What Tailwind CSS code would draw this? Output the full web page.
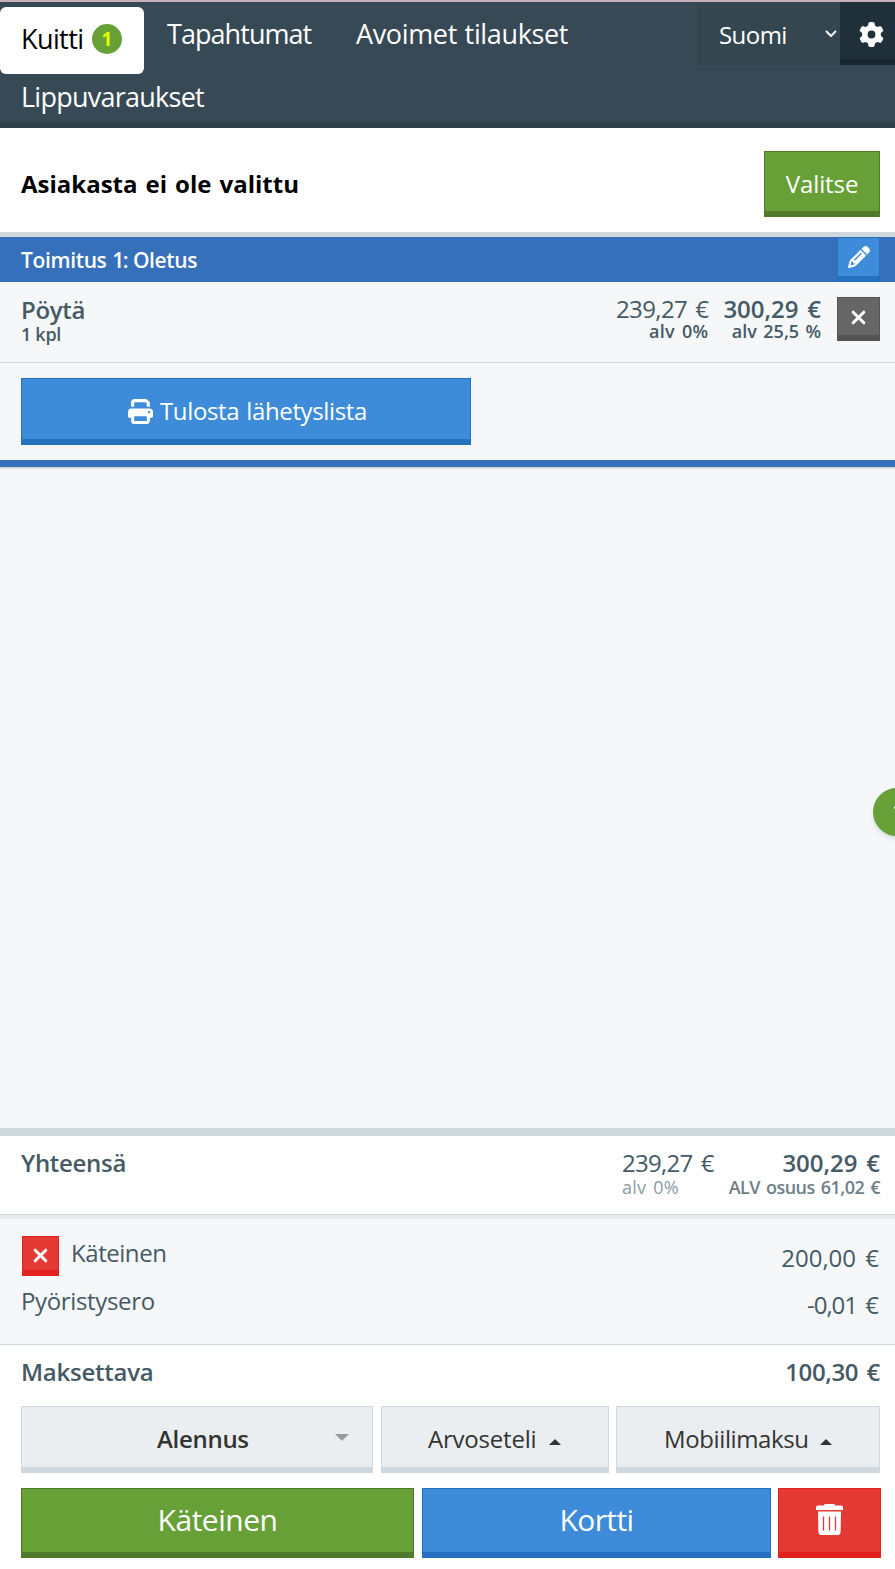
<!DOCTYPE html>
<html lang="fi">
<head>
<meta charset="utf-8">
<title>Kassa</title>
<script src="https://cdn.jsdelivr.net/npm/@tailwindcss/browser@4"></script>
</head>
<body class="flex h-[1569px] w-[895px] flex-col overflow-hidden bg-white font-['Open_Sans','Noto_Sans',sans-serif] text-[24px] leading-[30px] whitespace-nowrap text-[#455a64]">

<header class="flex h-[128px] shrink-0 border-t-2 border-b-6 border-t-[#c9b1b9] border-b-[#2f404b] bg-[#374955] text-[27px] text-white">
  <nav class="w-[697px]">
    <div class="flex h-[80px] pt-[5px]">
      <a class="flex h-[67px] w-[144px] rounded-md bg-white pt-[16px] pl-[21px] text-black"><span class="mt-px tracking-[-0.6px]">Kuitti</span><b class="mt-px mr-[22px] ml-auto flex size-[30px] items-center justify-center rounded-full bg-[#67a037] text-[19px] text-[#e6ff00]">1</b></a>
      <a class="mt-[12px] ml-[23px] w-[189px] tracking-[-0.95px]">Tapahtumat</a>
      <a class="mt-[12px] tracking-[-0.35px] [word-spacing:1px]">Avoimet tilaukset</a>
    </div>
    <a class="block pl-[21px] tracking-[-0.75px]">Lippuvaraukset</a>
  </nav>
  <div class="mt-px flex h-[62px] w-[143px] justify-between bg-[#344751] pt-[17px] pr-[3px] pl-[22px] text-[24px]">
    <span class="tracking-[-0.55px]">Suomi</span>
    <svg class="mt-[10px] h-[7px] w-[12px]" viewBox="0 0 12 7" fill="none" stroke="#fff" stroke-width="2"><path d="M1 1l5 5 5-5"/></svg>
  </div>
  <button class="flex h-[63px] w-[55px] border-b-6 border-[#1a262f] bg-[#20303b] pt-[19.500px] pl-[19px]">
    <svg class="size-[25px] shrink-0" viewBox="0 0 512 512" fill="#fff"><path d="M495.900 166.600c3.200 8.700 .5 18.400-6.400 24.600l-43.300 39.400c1.100 8.300 1.700 16.800 1.700 25.400s-.6 17.100-1.700 25.400l43.300 39.400c6.900 6.200 9.600 15.900 6.400 24.600c-4.400 11.900-9.700 23.300-15.800 34.300l-4.700 8.100c-6.600 11-14 21.400-22.100 31.200c-5.900 7.200-15.700 9.600-24.500 6.800l-55.700-17.700c-13.400 10.300-28.200 18.900-44 25.400l-12.500 57.100c-2 9.100-9 16.300-18.200 17.800c-13.800 2.300-28 3.500-42.500 3.500s-28.700-1.200-42.500-3.500c-9.200-1.500-16.200-8.700-18.200-17.800l-12.500-57.100c-15.800-6.500-30.600-15.100-44-25.400L83.100 425.900c-8.800 2.800-18.600 .3-24.500-6.800c-8.100-9.800-15.500-20.200-22.100-31.200l-4.700-8.100c-6.100-11-11.400-22.400-15.800-34.300c-3.200-8.700-.5-18.400 6.400-24.600l43.300-39.400C64.600 273.100 64 264.600 64 256s.6-17.100 1.700-25.400L22.400 191.200c-6.900-6.200-9.600-15.900-6.400-24.600c4.400-11.900 9.700-23.300 15.800-34.300l4.700-8.100c6.600-11 14-21.400 22.100-31.200c5.900-7.200 15.700-9.600 24.500-6.800l55.700 17.700c13.400-10.300 28.200-18.900 44-25.400l12.500-57.100c2-9.100 9-16.300 18.200-17.800C227.300 1.200 241.500 0 256 0s28.700 1.200 42.500 3.500c9.200 1.500 16.200 8.700 18.200 17.800l12.500 57.100c15.800 6.500 30.600 15.100 44 25.400l55.700-17.700c8.800-2.800 18.600-.3 24.500 6.800c8.100 9.800 15.500 20.200 22.100 31.200l4.700 8.100c6.100 11 11.400 22.400 15.800 34.300zM256 336a80 80 0 1 0 0-160 80 80 0 1 0 0 160z"/></svg>
  </button>
</header>

<section class="flex h-[109px] shrink-0 justify-between border-b-5 border-[#cfd8dc] pt-[23px] pr-[15px] pl-[21px]">
  <h2 class="mt-[18px] font-bold text-black [word-spacing:1.800px]">Asiakasta ei ole valittu</h2>
  <button class="flex h-[66px] w-[116px] justify-center border border-b-6 border-[#507a2b] bg-[#67a037] pt-[17px] tracking-[-0.1px] text-white">Valitse</button>
</section>

<main class="relative flex h-[899px] shrink-0 flex-col overflow-hidden border-b-8 border-[#cfd8dc] bg-[#f5f7f9]">
  <div class="flex h-[45px] justify-between bg-[#366fba] pr-[15px] pl-[21px] text-[21px] font-semibold text-white">
    <span class="mt-[8px] tracking-[-0.35px] [word-spacing:0.700px]">Toimitus <span class="tracking-[-1.500px]">1:</span> Oletus</span>
    <button class="flex h-[45px] w-[43px] border border-b-6 border-[#2571bf] bg-[#3d8bd9] pt-[8px] pl-[10px]">
      <svg class="size-[22px] shrink-0" viewBox="0 0 512 512" fill="#fff"><path d="M410.300 231l11.300-11.300-33.900-33.900-62.100-62.100L291.700 89.800l-11.300 11.300-22.600 22.600L58.600 322.900c-10.400 10.400-18 23.300-22.200 37.400L1 480.700c-2.500 8.400-.2 17.500 6.100 23.700s15.300 8.500 23.700 6.100l120.300-35.400c14.100-4.200 27-11.800 37.400-22.200L387.700 253.700 410.300 231zM160 399.400l-9.100 22.700c-4 3.100-8.500 5.400-13.300 6.900L59.400 452l23-78.100c1.400-4.900 3.800-9.400 6.900-13.300l22.700-9.100v32c0 8.800 7.200 16 16 16h32zM362.700 18.700L348.300 33.200 325.700 55.800 314.300 67.100l33.900 33.900 62.100 62.100 33.900 33.900 11.300-11.300 22.600-22.600 14.500-14.500c25-25 25-65.500 0-90.500L453.300 18.700c-25-25-65.500-25-90.500 0zm-47.400 168l-144 144c-6.200 6.200-16.400 6.200-22.600 0s-6.200-16.400 0-22.600l144-144c6.200-6.200 16.400-6.200 22.600 0s6.200 16.400 0 22.600z"/></svg>
    </button>
  </div>
  <div class="flex h-[81px] border-b border-[#cfd8dc] pr-[15px] pl-[21px] font-semibold">
    <div class="mt-[13px] mr-auto"><div class="h-[24px] tracking-[-0.300px]">Pöytä</div><div class="text-[18px] tracking-[-0.300px]">1 kpl</div></div>
    <div class="mt-[12px] text-right"><div class="h-[22px] text-[24px] font-normal tracking-[-0.600px] [word-spacing:2.500px]">239,27 €</div><div class="text-[18px] tracking-[0.3px] [word-spacing:2px]">alv 0%</div></div>
    <div class="mt-[12px] ml-[15px] text-right"><div class="h-[22px] text-[24px] tracking-[0px] [word-spacing:2.500px]">300,29 €</div><div class="text-[18px] tracking-[0.05px] [word-spacing:1.500px]">alv 25,5 %</div></div>
    <button class="mt-[15px] ml-[16px] flex h-[44px] w-[43px] justify-center border border-b-6 border-[#535353] bg-[#666] pt-[12px]">
      <svg class="size-[15px]" viewBox="0 0 15 15" stroke="#fff" stroke-width="3" stroke-linecap="round"><path d="M2.200 2.200l10.600 10.600M12.800 2.200L2.200 12.800"/></svg>
    </button>
  </div>
  <div class="h-[104px] border-b-7 border-[#366fba] pt-[15px] pl-[21px]">
    <button class="flex h-[67px] w-[450px] border border-b-6 border-[#2571bf] bg-[#3d8bd9] pt-[17px] pl-[106px] text-white">
      <svg class="mt-[3px] mr-[7px] size-[25px]" viewBox="0 0 512 512" fill="#fff"><path d="M128 0C92.700 0 64 28.700 64 64v96h64V64H354.700L384 93.300V160h64V93.300c0-17-6.700-33.300-18.700-45.300L400 18.700C388 6.700 371.700 0 354.700 0H128zM384 352v32 64H128V384 368 352H384zm64 32h32c17.700 0 32-14.300 32-32V256c0-35.300-28.700-64-64-64H64c-35.300 0-64 28.700-64 64v96c0 17.700 14.300 32 32 32H64v64c0 35.300 28.700 64 64 64H384c35.300 0 64-28.700 64-64V384zM432 248a24 24 0 1 1 0 48 24 24 0 1 1 0-48z"/></svg>
      <span class="tracking-[-0.35px] [word-spacing:1px]">Tulosta lähetyslista</span>
    </button>
  </div>
  <div class="h-[2px] border-t border-b border-t-[#cfd4d8] border-b-[#dfe2e4]"></div>
  <div class="absolute top-[551px] -right-[26px] size-[48px] rounded-full bg-[#67a037] shadow-md"><i class="absolute top-[18px] left-[21px] h-[3px] w-[6px] rounded-full bg-white"></i></div>
</main>

<section class="flex h-[79px] shrink-0 border-b border-[#cfd8dc] pt-[12px] pr-[15px] pl-[21px]">
  <h3 class="mr-auto font-semibold tracking-[-0.300px]">Yhteensä</h3>
  <div class="mr-[15px]"><div class="h-[24px] text-[24px] tracking-[-0.700px] [word-spacing:2.500px]">239,27 €</div><div class="text-[18px] tracking-[0.25px] text-[#8c9aa1] [word-spacing:2px]">alv 0%</div></div>
  <div class="text-right font-semibold"><div class="h-[24px] text-[24px] tracking-[0px] [word-spacing:2.500px]">300,29 €</div><div class="text-[18px] tracking-[-0.550px] text-[#6f7f87] [word-spacing:2px]">ALV osuus 61,02 €</div></div>
</section>

<section class="flex h-[130px] shrink-0 justify-between border-t-4 border-b border-t-[#e8eaec] border-b-[#cfd8dc] bg-[#f5f7f9] pr-[16px] pl-[22px]">
  <div>
    <div class="flex h-[67px] pt-[17px]">
      <button class="mr-[12px] flex h-[40px] w-[37px] justify-center border border-b-6 border-[#e3211c] bg-[#e53935] pt-[11px]">
        <svg class="size-[15px]" viewBox="0 0 15 15" stroke="#fff" stroke-width="3" stroke-linecap="round"><path d="M2.200 2.200l10.600 10.600M12.800 2.200L2.200 12.800"/></svg>
      </button>
      <span class="mt-[2px] tracking-[-0.450px]">Käteinen</span>
    </div>
    <span class="-ml-px tracking-[-0.35px]">Pyöristysero</span>
  </div>
  <div class="pt-[24px] text-right text-[24px]">
    <div class="h-[47px] tracking-[0px] [word-spacing:3px]">200,00 €</div>
    <div class="mr-px tracking-[-1px] [word-spacing:3px]">-0,01 €</div>
  </div>
</section>

<section class="flex h-[61px] shrink-0 justify-between pt-[12px] pr-[15px] pl-[21px] font-semibold">
  <span class="tracking-[-0.250px]">Maksettava</span>
  <span class="text-[24px] tracking-[-0.350px] [word-spacing:2.500px]">100,30 €</span>
</section>

<div class="flex h-[67px] shrink-0 pl-[21px] text-[#333]">
  <button class="flex w-[352px] border border-b-6 border-[#cfd8de] bg-[#eaeef1] pt-[17px] pl-[135px] font-semibold"><span class="tracking-[-0.300px]">Alennus</span>
    <svg class="mt-[10px] mr-[23px] ml-auto h-[7px] w-[14px]" viewBox="0 0 14 7" fill="#999"><path d="M0 0h14L7 7z"/></svg></button>
  <button class="ml-[8px] flex w-[228px] border border-b-6 border-[#cfd8de] bg-[#eaeef1] pt-[17px] pl-[46px]"><span class="tracking-[-0.2px]">Arvoseteli</span>
    <svg class="mt-[15px] ml-[13px] h-[6px] w-[12px]" viewBox="0 0 12 6" fill="#333"><path d="M0 6h12L6 0z"/></svg></button>
  <button class="ml-[7px] flex w-[264px] border border-b-6 border-[#cfd8de] bg-[#eaeef1] pt-[17px] pl-[47px]"><span class="tracking-[-0.38px]">Mobiilimaksu</span>
    <svg class="mt-[15px] ml-[11px] h-[6px] w-[12px]" viewBox="0 0 12 6" fill="#333"><path d="M0 6h12L6 0z"/></svg></button>
</div>

<div class="mt-[15px] flex h-[70px] shrink-0 pl-[21px] text-[30px] text-white">
  <button class="flex w-[393px] justify-center border border-b-6 border-[#507a2b] bg-[#67a037] pt-[16px] tracking-[-0.500px]">Käteinen</button>
  <button class="ml-[8px] flex w-[349px] justify-center border border-b-6 border-[#2571bf] bg-[#3d8bd9] pt-[16px] tracking-[-0.600px]">Kortti</button>
  <button class="ml-[7px] flex w-[103px] justify-center border border-b-6 border-[#e3211c] bg-[#e53935] pt-[15px]">
    <svg class="h-[31px] w-[27px]" viewBox="0 0 27 31" fill="#fff"><path d="M9 0h9q1 0 1 1.500h6q2 0 2 2V6H0V3.500q0-2 2-2h6Q8 0 9 0zM2 7.500h23l-.4 20.500q-.2 3-3 3H5.400q-2.800 0-3-3z"/><path d="M7.500 12.500V26.500M13.500 12.500V26.500M19.500 12.500V26.500" stroke="#e53935" stroke-width="1.300"/></svg>
  </button>
</div>
</body>
</html>
